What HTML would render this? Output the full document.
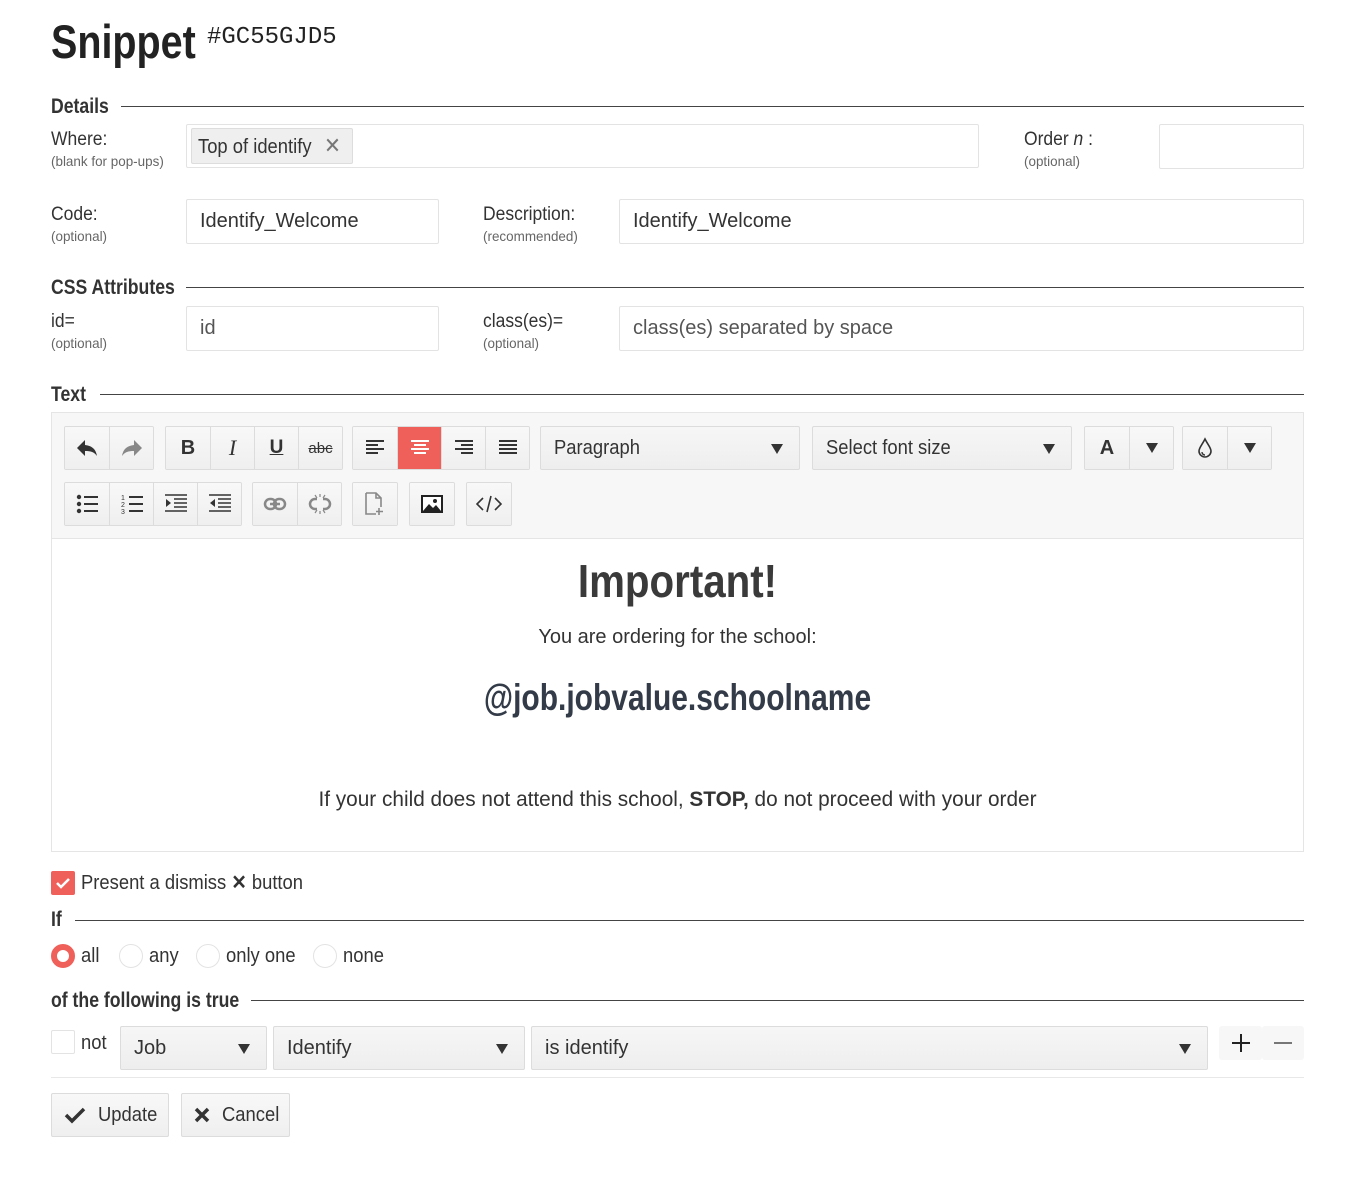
<!DOCTYPE html>
<html><head><meta charset="utf-8">
<style>
*{box-sizing:border-box;margin:0;padding:0}
body{width:1363px;height:1197px;background:#fff;position:relative;overflow:hidden;font-family:"Liberation Sans",sans-serif;color:#333}
.a{position:absolute}
.c{transform-origin:left center;white-space:nowrap}
.hb{transform:scaleX(0.84)}
.r{transform:scaleX(0.92)}
.s{transform:scaleX(0.96)}
.h{font-weight:bold;font-size:21px;color:#333;line-height:22px}
.line{position:absolute;height:1px;background:#444}
.lbl{font-size:19px;line-height:20px;color:#333}
.sub{font-size:14px;line-height:16px;color:#666}
.inp{position:absolute;border:1px solid #e3e3e3;border-radius:2px;background:#fff;font-size:20px;color:#333;padding-left:13px;display:flex;align-items:center}
.btn{position:absolute;background:linear-gradient(#f8f8f8,#efefef);border:1px solid #dcdcdc;border-radius:2px;display:flex;align-items:center;justify-content:center;color:#333}
.grp{position:absolute;display:flex;border:1px solid #dcdcdc;border-radius:2px;overflow:hidden;height:44px}
.grp>div{width:44px;height:42px;display:flex;align-items:center;justify-content:center;background:linear-gradient(#f8f8f8,#efefef);border-left:1px solid #dcdcdc}
.grp>div:first-child{border-left:none}
.sel{position:absolute;height:44px;border:1px solid #dcdcdc;border-radius:2px;background:linear-gradient(#f6f6f6,#eee);font-size:20px;display:flex;align-items:center;padding-left:13px;color:#333}
.tri{position:absolute;right:16px;top:17px;width:0;height:0;border-left:6px solid transparent;border-right:6px solid transparent;border-top:10px solid #333}
</style></head><body>

<div class="a c hb" style="left:51px;top:14px;font-size:47px;font-weight:bold;color:#222;line-height:56px">Snippet</div>
<div class="a" style="left:207px;top:24px;font-size:24px;font-family:'Liberation Mono',monospace;color:#222">#GC55GJD5</div>

<div class="a c h hb" style="left:51px;top:96px">Details</div>
<div class="line" style="left:121px;top:106px;width:1183px"></div>

<div class="a c lbl r" style="left:51px;top:130px">Where:</div>
<div class="a c sub s" style="left:51px;top:153px">(blank for pop-ups)</div>
<div class="inp" style="left:186px;top:124px;width:793px;height:44px;padding-left:4px">
  <div style="background:#efefef;border:1px solid #ddd;border-radius:2px;height:36px;width:162px;padding-left:6px;display:flex;align-items:center;font-size:20px;color:#333;overflow:hidden"><span class="c r" style="display:inline-block">Top of identify <span style="margin-left:8px;font-size:22px;color:#777">✕</span></span></div>
</div>
<div class="a c lbl r" style="left:1024px;top:130px">Order <i>n</i> :</div>
<div class="a c sub s" style="left:1024px;top:153px">(optional)</div>
<div class="inp" style="left:1159px;top:124px;width:145px;height:45px"></div>

<div class="a c lbl r" style="left:51px;top:205px">Code:</div>
<div class="a c sub s" style="left:51px;top:228px">(optional)</div>
<div class="inp" style="left:186px;top:199px;width:253px;height:45px">Identify_Welcome</div>
<div class="a c lbl r" style="left:483px;top:205px">Description:</div>
<div class="a c sub s" style="left:483px;top:228px">(recommended)</div>
<div class="inp" style="left:619px;top:199px;width:685px;height:45px">Identify_Welcome</div>

<div class="a c h hb" style="left:51px;top:277px">CSS Attributes</div>
<div class="line" style="left:186px;top:287px;width:1118px"></div>

<div class="a c lbl r" style="left:51px;top:312px">id=</div>
<div class="a c sub s" style="left:51px;top:335px">(optional)</div>
<div class="inp" style="left:186px;top:306px;width:253px;height:45px;color:#555">id</div>
<div class="a c lbl r" style="left:483px;top:312px">class(es)=</div>
<div class="a c sub s" style="left:483px;top:335px">(optional)</div>
<div class="inp" style="left:619px;top:306px;width:685px;height:45px;color:#555">class(es) separated by space</div>

<div class="a c h hb" style="left:51px;top:384px">Text</div>
<div class="line" style="left:100px;top:394px;width:1204px"></div>

<div class="a" style="left:51px;top:412px;width:1253px;height:440px;border:1px solid #e5e5e5"></div>
<div class="a" style="left:52px;top:413px;width:1251px;height:126px;background:#f7f7f7;border-bottom:1px solid #e5e5e5"></div>

<!-- row1 -->
<div class="grp" style="left:64px;top:426px">
  <div><svg width="24" height="20" viewBox="0 0 24 20"><path d="M10 2L2 10l8 8v-5c6 0 9 1 12 5-1-6-4-10-12-11z" fill="#333"/></svg></div>
  <div><svg width="24" height="20" viewBox="0 0 24 20"><path d="M14 2l8 8-8 8v-5c-6 0-9 1-12 5 1-6 4-10 12-11z" fill="#888"/></svg></div>
</div>
<div class="grp" style="left:165px;top:426px">
  <div style="font-weight:bold;font-size:20px">B</div>
  <div style="font-style:italic;font-size:22px;font-family:'Liberation Serif',serif">I</div>
  <div style="font-weight:bold;font-size:19px;text-decoration:underline">U</div>
  <div style="font-size:15px;text-decoration:line-through">abc</div>
</div>
<div class="grp" style="left:352px;top:426px">
  <div><svg width="20" height="16"><path d="M1 1h18M1 5h12M1 9h18M1 13h12" stroke="#333" stroke-width="2"/></svg></div>
  <div style="background:#f0605a"><svg width="20" height="16"><path d="M1 1h18M4 5h12M1 9h18M4 13h12" stroke="#fff" stroke-width="2"/></svg></div>
  <div><svg width="20" height="16"><path d="M1 1h18M7 5h12M1 9h18M7 13h12" stroke="#333" stroke-width="2"/></svg></div>
  <div><svg width="20" height="16"><path d="M1 1h18M1 5h18M1 9h18M1 13h18" stroke="#333" stroke-width="2"/></svg></div>
</div>
<div class="sel" style="left:540px;top:426px;width:260px"><span class="c r" style="display:inline-block">Paragraph</span><div class="tri"></div></div>
<div class="sel" style="left:812px;top:426px;width:260px"><span class="c r" style="display:inline-block">Select font size</span><div class="tri"></div></div>
<div class="grp" style="left:1084px;top:426px">
  <div style="font-weight:bold;font-size:20px">A</div>
  <div><span style="width:0;height:0;border-left:6px solid transparent;border-right:6px solid transparent;border-top:10px solid #333"></span></div>
</div>
<div class="grp" style="left:1182px;top:426px">
  <div><svg width="16" height="22" viewBox="0 0 16 22"><path d="M8 2C5 8 2 11 2 14a6 6 0 0 0 12 0c0-3-3-6-6-12z" fill="none" stroke="#333" stroke-width="1.6"/><path d="M5 15a3 3 0 0 0 3 3" fill="none" stroke="#333" stroke-width="1.4"/></svg></div>
  <div><span style="width:0;height:0;border-left:6px solid transparent;border-right:6px solid transparent;border-top:10px solid #333"></span></div>
</div>

<!-- row2 -->
<div class="grp" style="left:64px;top:482px">
  <div><svg width="22" height="20"><circle cx="3" cy="3" r="2.2" fill="#333"/><circle cx="3" cy="10" r="2.2" fill="#333"/><circle cx="3" cy="17" r="2.2" fill="#333"/><path d="M8 3h14M8 10h14M8 17h14" stroke="#333" stroke-width="2"/></svg></div>
  <div><svg width="22" height="22"><text x="0" y="7" font-size="7" font-family="Liberation Sans" fill="#333">1</text><text x="0" y="14" font-size="7" font-family="Liberation Sans" fill="#333">2</text><text x="0" y="21" font-size="7" font-family="Liberation Sans" fill="#333">3</text><path d="M8 4h14M8 11h14M8 18h14" stroke="#333" stroke-width="2"/></svg></div>
  <div><svg width="22" height="20"><path d="M0 1h22M9 5h13M9 9h13M9 13h13M0 17h22" stroke="#333" stroke-width="1.6"/><path d="M1 5l5 4-5 4z" fill="#333"/></svg></div>
  <div><svg width="22" height="20"><path d="M0 1h22M9 5h13M9 9h13M9 13h13M0 17h22" stroke="#333" stroke-width="1.6"/><path d="M6 5l-5 4 5 4z" fill="#333"/></svg></div>
</div>
<div class="grp" style="left:252px;top:482px">
  <div><svg width="24" height="14"><rect x="2" y="2" width="11" height="10" rx="5" fill="none" stroke="#888" stroke-width="2.5"/><rect x="11" y="2" width="11" height="10" rx="5" fill="none" stroke="#888" stroke-width="2.5"/><path d="M7 7h10" stroke="#888" stroke-width="2.5"/></svg></div>
  <div><svg width="24" height="22"><path d="M9 6H7a5 5 0 0 0 0 10h2M15 6h2a5 5 0 0 1 0 10h-2" fill="none" stroke="#888" stroke-width="2.5"/><path d="M12 1v3M12 18v3M7 2l2 3M17 2l-2 3M7 20l2-3M17 20l-2-3" stroke="#888" stroke-width="1.2"/></svg></div>
</div>
<div class="grp" style="left:352px;top:482px"><div><svg width="22" height="24"><path d="M2 1h10l5 5v9M2 1v21h10" fill="none" stroke="#888" stroke-width="1.6"/><path d="M12 1v5h5M15 16v7M12 19.5h7" fill="none" stroke="#888" stroke-width="1.6"/></svg></div></div>
<div class="grp" style="left:409px;top:482px"><div><svg width="22" height="18"><rect x="1" y="1" width="20" height="16" fill="#fff" stroke="#222" stroke-width="2"/><path d="M2 16l6-7 4 4 3-3 5 6z" fill="#222"/><circle cx="14" cy="6" r="2" fill="#222"/></svg></div></div>
<div class="grp" style="left:466px;top:482px"><div><svg width="26" height="18"><path d="M7 3L1 9l6 6M19 3l6 6-6 6M15 1l-4 16" fill="none" stroke="#333" stroke-width="1.6"/></svg></div></div>

<!-- content -->
<div class="a" style="left:52px;width:1251px;top:553px;text-align:center;font-size:46px;font-weight:bold;color:#3a3a3a;line-height:56px;transform:scaleX(0.876)">Important!</div>
<div class="a" style="left:52px;width:1251px;top:625px;text-align:center;font-size:20px;color:#333;line-height:24px">You are ordering for the school:</div>
<div class="a" style="left:52px;width:1251px;top:677px;text-align:center;font-size:37px;font-weight:bold;color:#333b48;line-height:42px;transform:scaleX(0.81)">@job.jobvalue.schoolname</div>
<div class="a" style="left:52px;width:1251px;top:788px;text-align:center;font-size:21px;color:#333;line-height:24px;transform:scaleX(0.99)">If your child does not attend this school, <b>STOP,</b> do not proceed with your order</div>

<!-- dismiss -->
<div class="a" style="left:51px;top:871px;width:24px;height:24px;background:#f0605a;border-radius:2px"><svg width="24" height="24"><path d="M6 12l4 4 8-8" fill="none" stroke="#fff" stroke-width="2.5"/></svg></div>
<div class="a c r" style="left:81px;top:871px;font-size:20px;line-height:24px">Present a dismiss <b>✕</b> button</div>

<div class="a c h hb" style="left:51px;top:909px">If</div>
<div class="line" style="left:75px;top:920px;width:1229px"></div>

<div class="a" style="left:51px;top:944px;width:24px;height:24px;border-radius:50%;border:6px solid #f0605a;background:#fff"></div>
<div class="a c r" style="left:81px;top:944px;font-size:20px;line-height:24px">all</div>
<div class="a" style="left:119px;top:944px;width:24px;height:24px;border-radius:50%;border:1px solid #e3e3e3"></div>
<div class="a c r" style="left:149px;top:944px;font-size:20px;line-height:24px">any</div>
<div class="a" style="left:196px;top:944px;width:24px;height:24px;border-radius:50%;border:1px solid #e3e3e3"></div>
<div class="a c r" style="left:226px;top:944px;font-size:20px;line-height:24px">only one</div>
<div class="a" style="left:313px;top:944px;width:24px;height:24px;border-radius:50%;border:1px solid #e3e3e3"></div>
<div class="a c r" style="left:343px;top:944px;font-size:20px;line-height:24px">none</div>

<div class="a c h hb" style="left:51px;top:990px">of the following is true</div>
<div class="line" style="left:251px;top:1000px;width:1053px"></div>

<div class="a" style="left:51px;top:1030px;width:24px;height:24px;border:1px solid #e3e3e3;border-radius:2px"></div>
<div class="a c r" style="left:81px;top:1031px;font-size:20px;line-height:24px">not</div>
<div class="sel" style="left:120px;top:1026px;width:147px">Job<div class="tri"></div></div>
<div class="sel" style="left:273px;top:1026px;width:252px">Identify<div class="tri"></div></div>
<div class="sel" style="left:531px;top:1026px;width:677px">is identify<div class="tri"></div></div>
<div class="a" style="left:1219px;top:1026px;width:43px;height:34px;background:#f7f7f7;border-radius:3px;display:flex;align-items:center;justify-content:center"><svg width="18" height="18"><path d="M9 0v18M0 9h18" stroke="#222" stroke-width="2"/></svg></div>
<div class="a" style="left:1262px;top:1026px;width:42px;height:34px;background:#f7f7f7;border-radius:3px;display:flex;align-items:center;justify-content:center"><svg width="18" height="18"><path d="M0 9h18" stroke="#777" stroke-width="2"/></svg></div>

<div class="a" style="left:51px;top:1077px;width:1253px;height:1px;background:#e8e8e8"></div>

<div class="btn" style="left:51px;top:1093px;width:118px;height:44px;font-size:20px;justify-content:flex-start;padding-left:12px"><svg width="22" height="18" style="margin-right:12px"><path d="M2 9l6 6L20 3" fill="none" stroke="#333" stroke-width="3.5"/></svg><span class="c r" style="display:inline-block">Update</span></div>
<div class="btn" style="left:181px;top:1093px;width:109px;height:44px;font-size:20px;justify-content:flex-start;padding-left:12px"><svg width="16" height="16" style="margin-right:12px"><path d="M2 2l12 12M14 2L2 14" stroke="#333" stroke-width="3.5"/></svg><span class="c r" style="display:inline-block">Cancel</span></div>

</body></html>
